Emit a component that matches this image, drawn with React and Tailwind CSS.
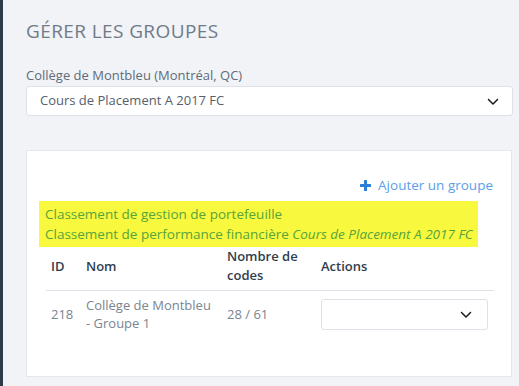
import React from 'react';

const Chevron = ({ className }) => (
  <svg viewBox="0 0 512 512" className={className} fill="currentColor">
    <path d="M233.4 406.6c12.5 12.5 32.8 12.5 45.3 0l192-192c12.5-12.5 12.5-32.8 0-45.3s-32.8-12.5-45.3 0L256 338.7 86.6 169.4c-12.5-12.5-32.8-12.5-45.3 0s-12.5 32.8 0 45.3l192 192z" />
  </svg>
);

const Plus = ({ className }) => (
  <svg viewBox="0 0 11 11" className={className} fill="currentColor">
    <rect x="4" y="0" width="3" height="11" rx="0.6" />
    <rect x="0" y="4" width="11" height="3" rx="0.6" />
  </svg>
);

export default function App() {
  return (
    <div className="flex h-[386px] w-[519px] overflow-hidden bg-[#f1f3f7] font-['Open_Sans',sans-serif]">
      <div className="w-[3px] shrink-0 bg-[#2d3b48]" />
      <div className="flex-1 pl-[23px] pr-[6px]">
        {/* titre */}
        <h1 className="pt-[19px] text-[19px] leading-6 tracking-[0.4px] text-[#6f7b88] uppercase">Gérer les groupes</h1>

        <div className="mt-[23px] text-[13px] leading-[18px] text-[#5f6b78]">Collège de Montbleu (Montréal, QC)</div>
        <div className="mt-[2px] flex h-[30px] items-center justify-between rounded-[3px] border border-[#dde2e8] bg-white pl-[13px] pr-[13px] text-[13px] text-[#56606b]">
          <span>Cours de Placement A 2017 FC</span>
          <Chevron className="h-[12px] w-[12px] text-[#1b1b1b]" />
        </div>

        {/* carte */}
        <div className="mt-[34px] h-[227px] w-[486px] border border-[#e4e7ec] bg-white pl-[19px] pr-[17px] pt-[24px]">
          <div className="flex justify-end">
            <a href="#" className="flex items-center gap-[7px] pr-px text-[13.5px] leading-5 text-[#5aa0e8]">
              <Plus className="h-[11px] w-[11px] text-[#2a7fd6]" />
              <span>Ajouter un groupe</span>
            </a>
          </div>

          <div className="-ml-[7px] mt-[6px] inline-block bg-[#f8f83e] py-[3px] pl-[6px] pr-[5px] text-[13.5px] leading-5 text-[#56a43c]">
            <div>Classement de gestion de portefeuille</div>
            <div>
              Classement de performance financière <em>Cours de Placement A 2017 FC</em>
            </div>
          </div>

          <div className="text-[13px]">
            <div className="flex items-center border-b border-[#dde2e8] pb-[5px] font-semibold leading-[19px] text-[#2f3e4e]">
              <div className="w-[35px] pl-[5px]">ID</div>
              <div className="w-[141px] pl-[5px]">Nom</div>
              <div className="w-[94px] pl-[5px]">
                Nombre de
                <br />
                codes
              </div>
              <div className="flex-1 pl-[5px]">Actions</div>
            </div>
            <div className="flex items-center pt-[5px] leading-[18px] text-[#7a8590]">
              <div className="w-[35px] pl-[5px]">218</div>
              <div className="w-[141px] pl-[5px]">
                Collège de Montbleu
                <br />- Groupe 1
              </div>
              <div className="w-[94px] pl-[5px]">28 / 61</div>
              <div className="flex-1 pl-[5px] pr-[6px]">
                <div className="flex h-[31px] items-center justify-end rounded-[3px] border border-[#dde2e8] bg-white pr-[15px]">
                  <Chevron className="h-[12px] w-[12px] text-[#1b1b1b]" />
                </div>
              </div>
            </div>
          </div>
        </div>
      </div>
    </div>
  );
}
